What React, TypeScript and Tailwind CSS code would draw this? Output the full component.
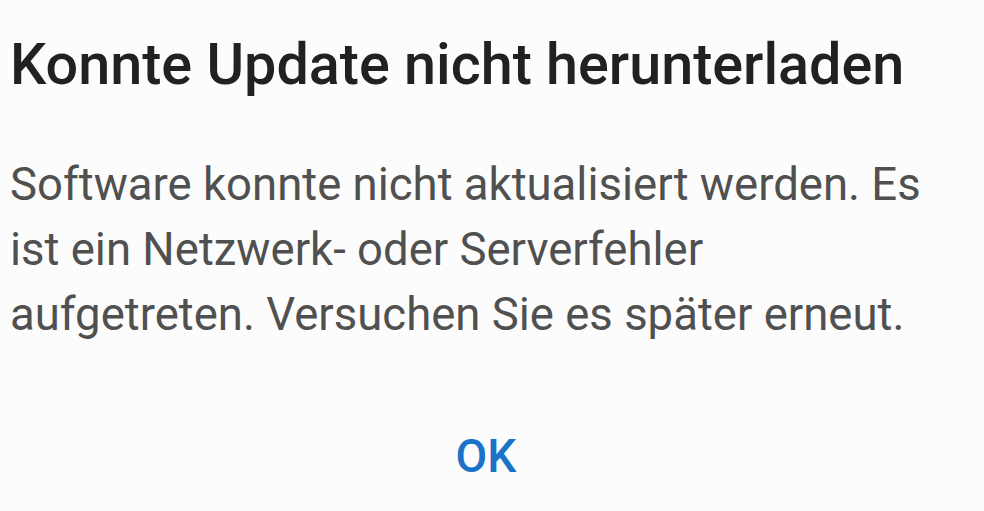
export default function App() {
  return (
    <div className="w-[984px] h-[511px] overflow-hidden bg-[#fcfcfc] font-['Roboto',sans-serif] flex flex-col">
      <h1 className="mt-[27px] pl-[10px] text-[57.5px] leading-[76px] font-medium text-[#212121]">
        Konnte Update nicht herunterladen
      </h1>
      <p className="mt-[49px] pl-[10px] pr-[50px] text-[45.5px] leading-[65px] text-[#505050]">
        Software konnte nicht aktualisiert werden. Es ist ein Netzwerk- oder Serverfehler aufgetreten. Versuchen Sie es später erneut.
      </p>
      <div className="mt-[86px] flex justify-center pr-[12px]">
        <button className="text-[46px] font-medium text-[#1a73c8] leading-none">OK</button>
      </div>
    </div>
  );
}
